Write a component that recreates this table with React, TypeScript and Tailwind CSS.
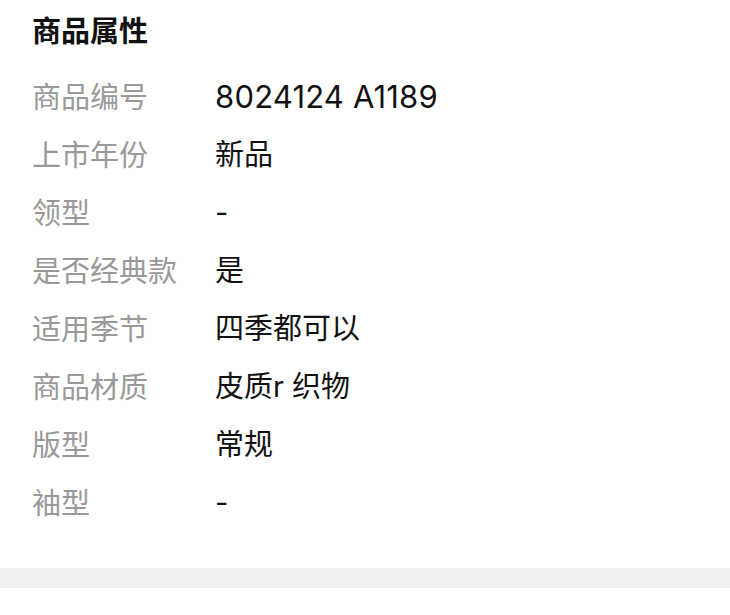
const rows: [string, string][] = [
  ['商品编号', '8024124 A1189'],
  ['上市年份', '新品'],
  ['领型', '-'],
  ['是否经典款', '是'],
  ['适用季节', '四季都可以'],
  ['商品材质', '皮质r 织物'],
  ['版型', '常规'],
  ['袖型', '-'],
]

export default function App() {
  return (
    <div
      className="w-[730px] h-[615px] bg-white overflow-hidden"
      style={{ fontFamily: '"Noto Sans", "Noto Sans CJK SC", sans-serif' }}
    >
      <div className="px-[32px] pt-[2px]">
        <h2 className="h-[58px] flex items-center text-[29px] font-bold text-[#111]">商品属性</h2>
        <div className="mt-[8px] flex flex-col">
          {rows.map(([label, value]) => (
            <div key={label} className="h-[58px] flex items-center">
              <span className="w-[183px] shrink-0 text-[29px] text-[#999]">{label}</span>
              {/[0-9]/.test(value) ? (
                <span className="text-[31px] tracking-[0.2px] text-[#111] font-['Inter',sans-serif]">{value}</span>
              ) : (
                <span className="text-[29px] text-[#111] font-['Inter','Noto_Sans_CJK_SC',sans-serif]">{value}</span>
              )}
            </div>
          ))}
        </div>
      </div>
      <div className="mt-[36px] h-[20px] bg-[#f0f0f0]" />
    </div>
  )
}
